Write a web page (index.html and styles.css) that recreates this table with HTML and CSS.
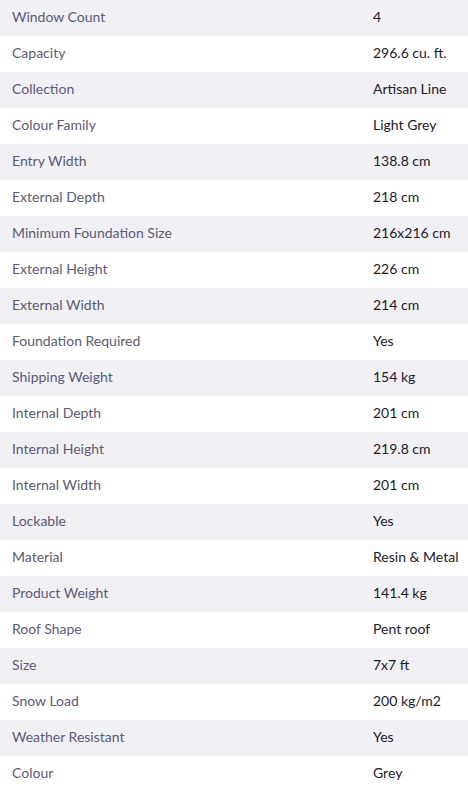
FILE: index.html
```html
<!DOCTYPE html>
<html>
<head>
<meta charset="utf-8">
<link rel="stylesheet" href="styles.css">
</head>
<body>
<div class="specs">
  <div class="row"><span class="label">Window Count</span><span class="value">4</span></div>
  <div class="row"><span class="label">Capacity</span><span class="value">296.6 cu. ft.</span></div>
  <div class="row"><span class="label">Collection</span><span class="value">Artisan Line</span></div>
  <div class="row"><span class="label">Colour Family</span><span class="value">Light Grey</span></div>
  <div class="row"><span class="label">Entry Width</span><span class="value">138.8 cm</span></div>
  <div class="row"><span class="label">External Depth</span><span class="value">218 cm</span></div>
  <div class="row"><span class="label">Minimum Foundation Size</span><span class="value">216x216 cm</span></div>
  <div class="row"><span class="label">External Height</span><span class="value">226 cm</span></div>
  <div class="row"><span class="label">External Width</span><span class="value">214 cm</span></div>
  <div class="row"><span class="label">Foundation Required</span><span class="value">Yes</span></div>
  <div class="row"><span class="label">Shipping Weight</span><span class="value">154 kg</span></div>
  <div class="row"><span class="label">Internal Depth</span><span class="value">201 cm</span></div>
  <div class="row"><span class="label">Internal Height</span><span class="value">219.8 cm</span></div>
  <div class="row"><span class="label">Internal Width</span><span class="value">201 cm</span></div>
  <div class="row"><span class="label">Lockable</span><span class="value">Yes</span></div>
  <div class="row"><span class="label">Material</span><span class="value">Resin &amp; Metal</span></div>
  <div class="row"><span class="label">Product Weight</span><span class="value">141.4 kg</span></div>
  <div class="row"><span class="label">Roof Shape</span><span class="value">Pent roof</span></div>
  <div class="row"><span class="label">Size</span><span class="value">7x7 ft</span></div>
  <div class="row"><span class="label">Snow Load</span><span class="value">200 kg/m2</span></div>
  <div class="row"><span class="label">Weather Resistant</span><span class="value">Yes</span></div>
  <div class="row"><span class="label">Colour</span><span class="value">Grey</span></div>
</div>
</body>
</html>
```
FILE: styles.css
```css
html, body {
  margin: 0;
  padding: 0;
  background: #ffffff;
}
body {
  font-family: "Lato", "Liberation Sans", sans-serif;
  font-size: 14px;
}
.specs {
  display: flex;
  flex-direction: column;
  width: 468px;
}
.row {
  display: grid;
  grid-template-columns: 361px auto;
  height: 36px;
  align-items: center;
  padding: 0 0 3px 12px;
  box-sizing: border-box;
  white-space: nowrap;
}
.row:nth-child(odd) {
  background: #f1f0f5;
}
.label {
  color: #5c5a77;
}
.value {
  color: #1c1a2b;
}
```
